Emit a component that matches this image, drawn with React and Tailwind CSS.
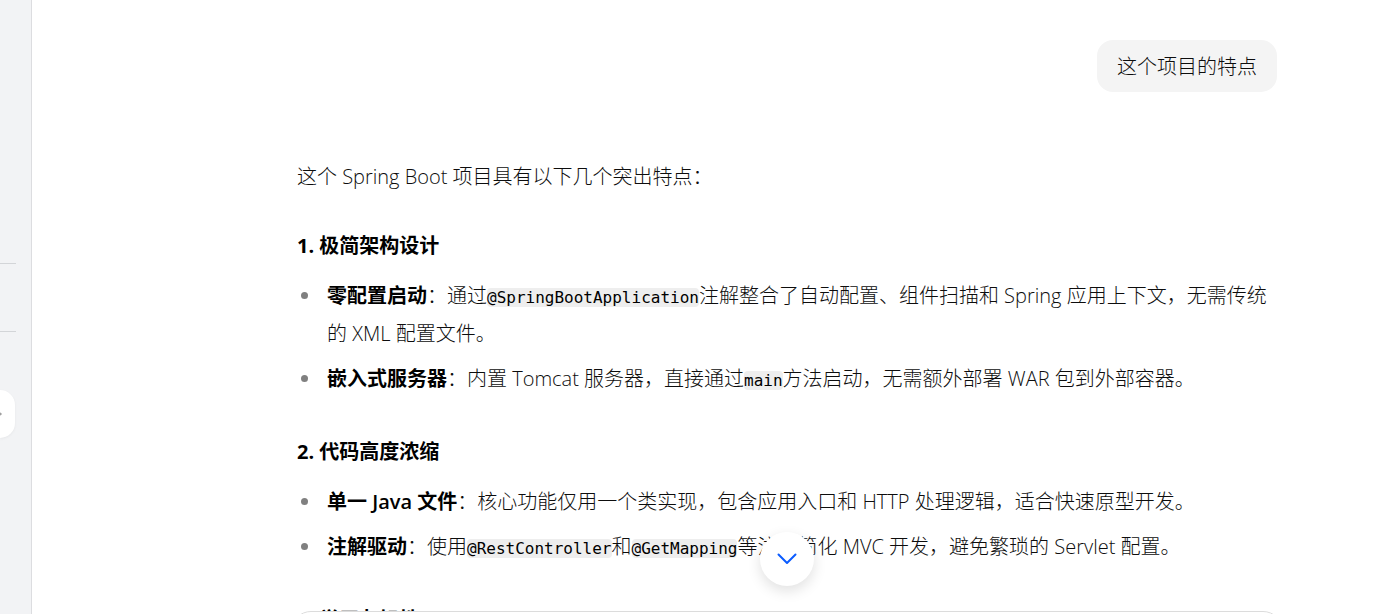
function Code({ children }) {
  return (
    <code className="rounded bg-[#eeeeee] font-['DejaVu_Sans_Mono','Noto_Sans_CJK_SC',monospace] text-[16px] leading-none font-normal text-black">
      {children}
    </code>
  );
}

function Item({ title, children }) {
  return (
    <li className="flex gap-[19px] pl-1">
      <span aria-hidden="true" className="mt-[15px] size-[7px] shrink-0 rounded-full bg-[#808080]" />
      <p className="min-w-0 flex-1">
        <strong className="font-semibold text-black">{title}</strong>
        {children}
      </p>
    </li>
  );
}

function Section({ title, children }) {
  return (
    <section className="mt-[39px]">
      <h3 className="text-[20px] leading-[30px] font-bold text-black">{title}</h3>
      {children && <ul className="mt-4 flex flex-col gap-[7px]">{children}</ul>}
    </section>
  );
}

export default function App() {
  return (
    <div className="flex h-screen overflow-hidden bg-white font-['Open_Sans','Noto_Sans_CJK_SC',sans-serif] text-[20px] leading-[38px] font-light text-[#0d0d0d]" lang="zh-CN">
      <aside className="w-8 shrink-0 border-r border-[#dcdde0] bg-[#f2f3f5] pr-[15px]">
        <div className="mt-[263px] h-[69px] border-y border-[#d3d5d8]" />
        <button type="button" aria-label="展开" className="mt-[58px] flex h-12 w-[15px] items-center rounded-r-2xl bg-white shadow-[0_1px_3px_rgba(0,0,0,0.05)]">
          <svg className="h-2 w-1" viewBox="0 0 4 8" fill="none" stroke="#a0a0a0" strokeWidth="1.5">
            <path d="M-2 1.5 1 4l-3 2.5" />
          </svg>
        </button>
      </aside>
      <main className="relative flex min-w-0 flex-1 flex-col pr-[109px] pl-[265px]">
        <div className="min-h-0 flex-1 overflow-hidden">
          <div className="flex justify-end pt-10">
            <p className="rounded-2xl bg-[#f4f4f4] px-5 pt-2 pb-1.5">这个项目的特点</p>
          </div>
          <article className="pt-[70px]">
            <p className="leading-[30px]">这个 Spring Boot 项目具有以下几个突出特点：</p>
            <Section title="1. 极简架构设计">
              <Item title="零配置启动">
                ：通过<Code>@SpringBootApplication</Code>注解整合了自动配置、组件扫描和 Spring 应用上下文，无需传统的 XML 配置文件。
              </Item>
              <Item title="嵌入式服务器">
                ：内置 Tomcat 服务器，直接通过<Code>main</Code>方法启动，无需额外部署 WAR 包到外部容器。
              </Item>
            </Section>
            <Section title="2. 代码高度浓缩">
              <Item title="单一 Java 文件">
                ：核心功能仅用一个类实现，包含应用入口和 HTTP 处理逻辑，适合快速原型开发。
              </Item>
              <Item title="注解驱动">
                ：使用<Code>@RestController</Code>和<Code>@GetMapping</Code>等注解简化 MVC 开发，避免繁琐的 Servlet 配置。
              </Item>
            </Section>
            <Section title="3. 学习友好性" />
          </article>
        </div>
        <footer className="relative -mx-1.5 h-[3px] shrink-0">
          <div className="h-full overflow-hidden">
            <div className="h-32 rounded-[20px] border border-[#dcdcdc] bg-white" />
          </div>
          <button type="button" aria-label="滚动到底部" className="absolute bottom-7 left-1/2 flex size-[54px] -translate-x-1/2 items-center justify-center rounded-full bg-white shadow-[0_5px_14px_rgba(0,0,0,0.12)]">
            <svg className="h-3 w-5" viewBox="0 0 20 12" fill="none" stroke="#0b5cff" strokeWidth="2" strokeLinecap="round" strokeLinejoin="round">
              <path d="m1.5 1.5 8.5 8.5 8.5-8.5" />
            </svg>
          </button>
        </footer>
      </main>
    </div>
  );
}
